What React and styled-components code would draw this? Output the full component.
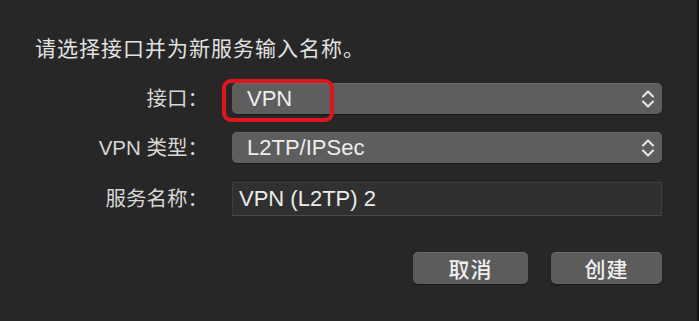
import React from "react";
import styled, { createGlobalStyle } from "styled-components";

const Global = createGlobalStyle`
  html, body {
    margin: 0;
    padding: 0;
    background: #272727;
  }
  body {
    font-family: "Noto Sans CJK SC", "Liberation Sans", sans-serif;
    -webkit-font-smoothing: antialiased;
  }
`;

const Window = styled.div`
  width: 699px;
  height: 321px;
  box-sizing: border-box;
  background: #272727;
  border-right: 2px solid #121212;
  padding: 33px 0 0 35px;
  overflow: hidden;
`;

const Title = styled.div`
  font-size: 21px;
  line-height: 28px;
  color: #e2e2e2;
  letter-spacing: 1px;
`;

const Form = styled.div`
  display: grid;
  grid-template-columns: 173px 430px;
  column-gap: 24px;
  margin-top: 22px;
  align-items: center;
`;

const Label = styled.div`
  text-align: right;
  font-size: 20.5px;
  color: #d6d6d6;
  height: ${(p) => p.$h}px;
  line-height: ${(p) => p.$h}px;
  margin-bottom: ${(p) => p.$mb}px;
  font-family: "Liberation Sans", "Noto Sans CJK SC", sans-serif;
`;

const Popup = styled.div`
  position: relative;
  height: 31px;
  margin-bottom: ${(p) => p.$mb}px;
  border-radius: 5px;
  background: #5e5e5e;
  box-shadow: inset 0 1px 0 rgba(255, 255, 255, 0.08), 0 1px 1px rgba(0, 0, 0, 0.35);
  display: flex;
  align-items: center;
  padding-left: 15px;
  font-family: "Liberation Sans", sans-serif;
  font-size: 22px;
  color: #ededed;
`;

const PopupText = styled.span`
  flex: 1;
`;

const Chevrons = styled.svg`
  width: 14px;
  height: 20px;
  margin-right: 7px;
`;

const Highlight = styled.div`
  position: absolute;
  left: -10px;
  top: -4px;
  width: 112px;
  height: 43px;
  box-sizing: border-box;
  border: 4px solid #e0161f;
  border-radius: 9px;
  pointer-events: none;
`;

const TextField = styled.div`
  height: 34px;
  box-sizing: border-box;
  background: #303030;
  border: 1px solid #3d3d3d;
  border-bottom-color: #4a4a4a;
  display: flex;
  align-items: center;
  padding-left: 6px;
  font-family: "Liberation Sans", sans-serif;
  font-size: 22px;
  color: #ececec;
`;

const Buttons = styled.div`
  display: flex;
  justify-content: flex-end;
  gap: 23px;
  width: 627px;
  margin-top: 36px;
`;

const Button = styled.div`
  width: ${(p) => p.$w}px;
  height: 32px;
  border-radius: 5px;
  background: #5c5c5c;
  box-shadow: inset 0 1px 0 rgba(255, 255, 255, 0.1), 0 1px 1px rgba(0, 0, 0, 0.4);
  display: flex;
  align-items: center;
  justify-content: center;
  font-size: 21px;
  color: #f0f0f0;
  font-weight: 500;
  letter-spacing: 1px;
`;

const Chev = () => (
  <Chevrons viewBox="0 0 14 20">
    <path d="M2 7.5 L7 2.5 L12 7.5" fill="none" stroke="#e8e8e8" strokeWidth="2" strokeLinecap="round" strokeLinejoin="round" />
    <path d="M2 12.5 L7 17.5 L12 12.5" fill="none" stroke="#e8e8e8" strokeWidth="2" strokeLinecap="round" strokeLinejoin="round" />
  </Chevrons>
);

export default function App() {
  return (
    <>
      <Global />
      <Window>
        <Title>请选择接口并为新服务输入名称。</Title>
        <Form>
          <Label $h={31} $mb={18}>接口：</Label>
          <Popup $mb={18}>
            <PopupText>VPN</PopupText>
            <Chev />
            <Highlight />
          </Popup>
          <Label $h={31} $mb={19}>VPN 类型：</Label>
          <Popup $mb={19}>
            <PopupText>L2TP/IPSec</PopupText>
            <Chev />
          </Popup>
          <Label $h={34} $mb={0}>服务名称：</Label>
          <TextField>VPN (L2TP) 2</TextField>
        </Form>
        <Buttons>
          <Button $w={115}>取消</Button>
          <Button $w={111}>创建</Button>
        </Buttons>
      </Window>
    </>
  );
}
